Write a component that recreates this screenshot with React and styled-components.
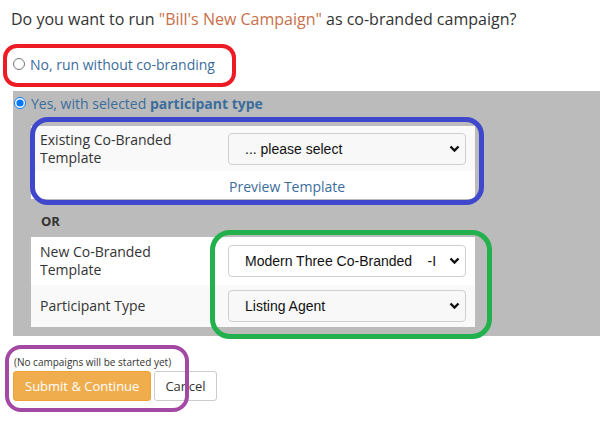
import React from "react";
import styled, { createGlobalStyle } from "styled-components";

const GlobalStyle = createGlobalStyle`
  html, body {
    margin: 0;
    padding: 0;
    background: #fff;
  }
  * { box-sizing: border-box; }
`;

const Page = styled.div`
  position: relative;
  width: 600px;
  height: 425px;
  overflow: hidden;
  font-family: "Open Sans", "Liberation Sans", sans-serif;
  color: #333;
`;

const Title = styled.div`
  padding: 9px 11px 0;
  font-size: 16px;
  line-height: 20px;
`;

const Quoted = styled.span`
  color: #c96f4a;
`;

const Choice = styled.label`
  display: flex;
  align-items: center;
  gap: 5px;
  height: 18px;
  font-size: 14px;
  color: #3b6d9c;
  padding-left: ${(p) => p.$indent || 13}px;
  margin-top: ${(p) => p.$top || 0}px;

  b {
    font-weight: 700;
  }
`;

const Radio = styled.input`
  margin: 0;
  width: 12px;
  height: 12px;
  accent-color: #0075ff;
`;

const Panel = styled.div`
  margin: 18px 0 0 13px;
  background: #bbbbbb;
  padding: 3px 0 9px;
`;

const Table = styled.div`
  margin: ${(p) => p.$top}px 0 0 18px;
  width: 444px;
  background: #fff;
  display: flex;
  flex-direction: column;
`;

const Row = styled.div`
  display: grid;
  grid-template-columns: 188px 1fr;
  align-items: center;
  height: ${(p) => p.$h}px;
  background: ${(p) => (p.$shade ? "#f9f9f9" : "#fff")};
`;

const Label = styled.div`
  padding-left: 9px;
  font-size: 14px;
  line-height: 18px;
  color: #333;
`;

const Cell = styled.div`
  padding: 0 9px;
  position: relative;
`;

const Select = styled.select`
  appearance: none;
  width: 100%;
  height: 32px;
  border: 1px solid #cfcfcf;
  border-radius: 4px;
  background: ${(p) => (p.$light ? "#fff" : "#f8f8f8")};
  font-family: "Liberation Sans", Arial, sans-serif;
  font-size: 14px;
  color: #111;
  padding: 0 28px 0 16px;
  outline: none;
`;

const Chevron = styled.svg`
  position: absolute;
  right: 15px;
  top: 50%;
  transform: translateY(-50%);
  pointer-events: none;
`;

const Link = styled.div`
  padding-left: 10px;
  padding-top: 3px;
  font-size: 14px;
  color: #3b6d9c;
`;

const Or = styled.div`
  margin: 14px 0 0 28px;
  font-size: 13px;
  font-weight: 700;
  line-height: 17px;
  color: #333;
`;

const Note = styled.div`
  margin: 20px 0 0 14px;
  font-size: 10px;
  line-height: 12px;
  color: #333;
`;

const Buttons = styled.div`
  display: flex;
  gap: 3px;
  margin: 3px 0 0 13px;
`;

const Button = styled.button`
  height: 30px;
  padding: 0 ${(p) => (p.$primary ? 11 : 10)}px;
  border: 1px solid ${(p) => (p.$primary ? "#eea236" : "#ccc")};
  border-radius: 3px;
  background: ${(p) => (p.$primary ? "#f0ad4e" : "#fff")};
  color: ${(p) => (p.$primary ? "#fff" : "#333")};
  font-family: "Open Sans", "Liberation Sans", sans-serif;
  font-size: 13px;
`;

const Ring = styled.div`
  position: absolute;
  left: ${(p) => p.$x}px;
  top: ${(p) => p.$y}px;
  width: ${(p) => p.$w}px;
  height: ${(p) => p.$h}px;
  border: ${(p) => p.$b}px solid ${(p) => p.$c};
  border-radius: ${(p) => p.$r}px;
  pointer-events: none;
`;

const Down = () => (
  <Chevron width="11" height="8" viewBox="0 0 11 8">
    <path d="M1.5 1.5 L5.5 5.5 L9.5 1.5" fill="none" stroke="#111" strokeWidth="2.4" />
  </Chevron>
);

const Dropdown = ({ value, light }) => (
  <Cell>
    <Select $light={light} defaultValue={value}>
      <option>{value}</option>
    </Select>
    <Down />
  </Cell>
);

export default function App() {
  return (
    <Page>
      <GlobalStyle />
      <Title>
        Do you want to run <Quoted>"Bill's New Campaign"</Quoted> as co-branded campaign?
      </Title>
      <Choice $top={26} $indent={13}>
        <Radio type="radio" name="cb" />
        <span>No, run without co-branding</span>
      </Choice>
      <Panel>
        <Choice $indent={1}>
          <Radio type="radio" name="cb" defaultChecked />
          <span>
            Yes, with selected <b>participant type</b>
          </span>
        </Choice>
        <Table $top={14}>
          <Row $h={45} $shade>
            <Label>
              Existing Co-Branded
              <br />
              Template
            </Label>
            <Dropdown value="... please select" />
          </Row>
          <Row $h={28}>
            <span />
            <Link>Preview Template</Link>
          </Row>
        </Table>
        <Or>OR</Or>
        <Table $top={7}>
          <Row $h={48}>
            <Label>
              New Co-Branded
              <br />
              Template
            </Label>
            <Dropdown light value={"Modern Three Co-Branded\u00a0\u00a0\u00a0\u00a0-I"} />
          </Row>
          <Row $h={42} $shade>
            <Label>Participant Type</Label>
            <Dropdown value="Listing Agent" />
          </Row>
        </Table>
      </Panel>
      <Note>(No campaigns will be started yet)</Note>
      <Buttons>
        <Button $primary>Submit &amp; Continue</Button>
        <Button>Cancel</Button>
      </Buttons>
      <Ring $x={3} $y={44} $w={233} $h={43} $b={4} $c="#ed1c24" $r={14} />
      <Ring $x={30} $y={117} $w={454} $h={88} $b={5} $c="#3f48cc" $r={18} />
      <Ring $x={210} $y={230} $w={282} $h={109} $b={5} $c="#22b14c" $r={20} />
      <Ring $x={5} $y={345} $w={184} $h={67} $b={4} $c="#a349a4" $r={16} />
    </Page>
  );
}
